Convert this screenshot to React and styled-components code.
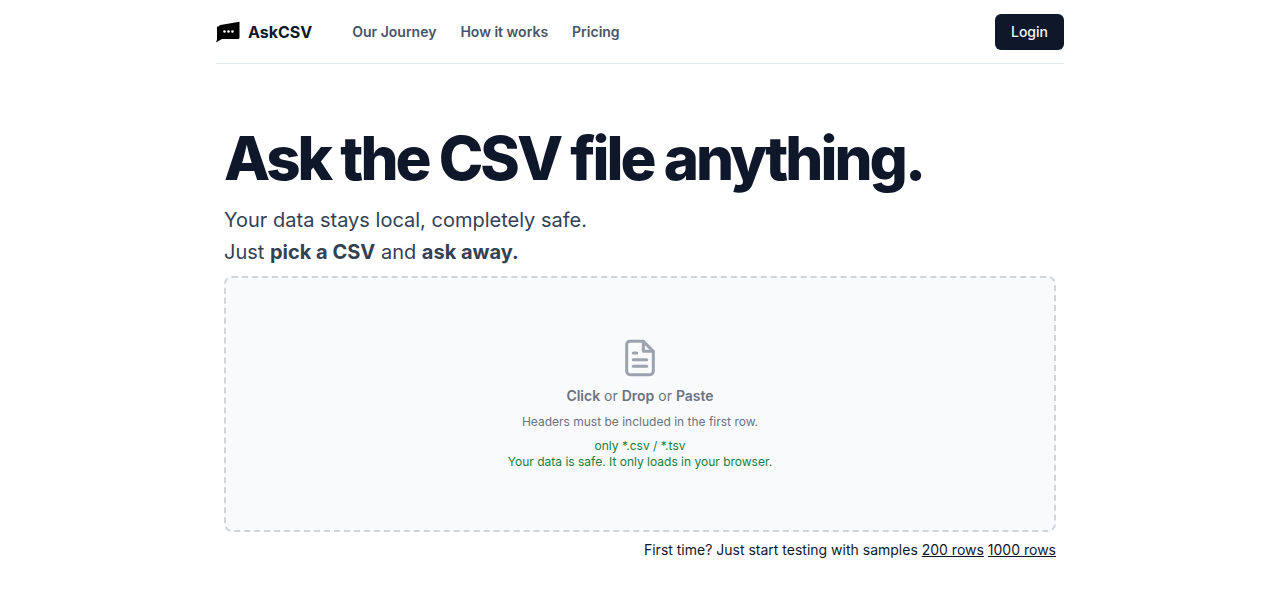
import React from "react";
import styled, { createGlobalStyle } from "styled-components";

const GlobalStyle = createGlobalStyle`
  * {
    box-sizing: border-box;
  }
  body {
    margin: 0;
    background: #fff;
    font-family: Inter, "Liberation Sans", sans-serif;
    color: #0f172a;
  }
`;

const Page = styled.div`
  width: 848px;
  margin: 0 auto;
`;

const Header = styled.header`
  display: flex;
  align-items: center;
  justify-content: space-between;
  height: 64px;
  border-bottom: 1px solid #e2e8f0;
`;

const Left = styled.div`
  display: flex;
  align-items: center;
`;

const Brand = styled.a`
  display: flex;
  align-items: center;
  gap: 8px;
  margin-right: 40px;
  font-size: 16px;
  font-weight: 700;
  color: #0f172a;
`;

const Nav = styled.nav`
  display: flex;
  gap: 24px;
`;

const NavLink = styled.a`
  font-size: 14px;
  font-weight: 600;
  color: #475569;
`;

const LoginButton = styled.button`
  height: 36px;
  padding: 0 16px;
  border: none;
  border-radius: 6px;
  background: #0f172a;
  color: #f8fafc;
  font-family: inherit;
  font-size: 14px;
  font-weight: 500;
`;

const Main = styled.main`
  padding: 60px 8px 0;
`;

const Title = styled.h1`
  margin: 0 0 12px;
  font-size: 60px;
  line-height: 68px;
  font-weight: 800;
  letter-spacing: -0.05em;
  color: #0f172a;
`;

const Lead = styled.p`
  margin: 0;
  font-size: 20px;
  line-height: 32px;
  color: #334155;

  b {
    font-weight: 700;
  }
`;

const DropZone = styled.div`
  display: flex;
  flex-direction: column;
  align-items: center;
  justify-content: center;
  height: 256px;
  margin-top: 8px;
  border: 2px dashed #d1d5db;
  border-radius: 8px;
  background: #f9fafb;
`;

const FileIcon = styled.svg`
  width: 40px;
  height: 40px;
  margin-bottom: 8px;
  color: #9ca3af;
`;

const DropTitle = styled.p`
  margin: 0 0 8px;
  font-size: 14px;
  line-height: 20px;
  color: #6b7280;

  b {
    font-weight: 600;
  }
`;

const Hint = styled.p`
  margin: 0 0 8px;
  font-size: 12px;
  line-height: 16px;
  color: #6b7280;
`;

const Safe = styled.p`
  margin: 0;
  font-size: 12px;
  line-height: 16px;
  text-align: center;
  color: #15803d;
`;

const Samples = styled.p`
  margin: 8px 0 0;
  font-size: 14px;
  line-height: 20px;
  text-align: right;
  color: #0f172a;

  a {
    color: inherit;
    text-decoration: underline;
  }
`;

const App = () => {
  return (
    <Page>
      <GlobalStyle />
      <Header>
        <Left>
          <Brand>
            <svg width="24" height="24" viewBox="0 0 24 24">
              <path d="M3 6.5C3 5.6 3.6 5.1 4.5 5L23.5 1.8V17.5C23.5 18.4 22.9 19 22 19H6L0 22.5 1 19.5V6.5Z" fill="#000" />
              <circle cx="8.5" cy="11.5" r="1.3" fill="#fff" />
              <circle cx="12.5" cy="11.5" r="1.3" fill="#fff" />
              <circle cx="16.5" cy="11.5" r="1.3" fill="#fff" />
            </svg>
            AskCSV
          </Brand>
          <Nav>
            <NavLink>Our Journey</NavLink>
            <NavLink>How it works</NavLink>
            <NavLink>Pricing</NavLink>
          </Nav>
        </Left>
        <LoginButton>Login</LoginButton>
      </Header>
      <Main>
        <Title>Ask the CSV file anything.</Title>
        <Lead>Your data stays local, completely safe.</Lead>
        <Lead>
          Just <b>pick a CSV</b> and <b>ask away.</b>
        </Lead>
        <DropZone>
          <FileIcon viewBox="0 0 24 24" fill="none" stroke="currentColor" strokeWidth="1.8" strokeLinecap="round" strokeLinejoin="round">
            <path d="M14 2H6a2 2 0 0 0-2 2v16a2 2 0 0 0 2 2h12a2 2 0 0 0 2-2V8z" />
            <path d="M14 2v6h6" />
            <path d="M8 9h2" />
            <path d="M8 13h8" />
            <path d="M8 17h8" />
          </FileIcon>
          <DropTitle>
            <b>Click</b> or <b>Drop</b> or <b>Paste</b>
          </DropTitle>
          <Hint>Headers must be included in the first row.</Hint>
          <Safe>only *.csv / *.tsv</Safe>
          <Safe>Your data is safe. It only loads in your browser.</Safe>
        </DropZone>
        <Samples>
          First time? Just start testing with samples <a>200 rows</a> <a>1000 rows</a>
        </Samples>
      </Main>
    </Page>
  );
};

export default App;
